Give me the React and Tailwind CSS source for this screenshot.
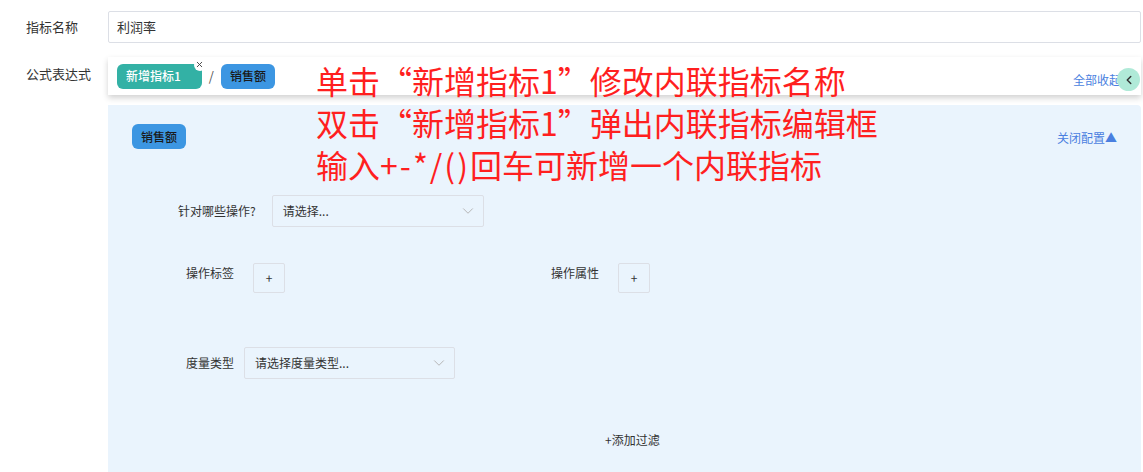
import React from 'react';
import { ChevronDown, ChevronLeft, X } from 'lucide-react';

const font = { fontFamily: '"Noto Sans CJK SC", "Noto Sans", sans-serif' };

const SelectBox = ({ placeholder, width }) => (
  <div className={`flex items-center justify-between h-[32px] border border-[#dcdfe6] rounded-[2px] pl-[10px] pr-[6px] text-[12px] text-[#333] ${width}`}>
    <span>{placeholder}</span>
    <ChevronDown className="h-[18px] w-[18px] text-[#b4b4b4]" strokeWidth={1.3} />
  </div>
);

const PlusButton = () => (
  <div className="flex items-center justify-center w-[32px] h-[30px] border border-[#dcdfe6] rounded-[2px] text-[12px] text-[#333]">+</div>
);

export default function App() {
  return (
    <div className="relative w-full h-[472px] bg-white overflow-hidden" style={font}>
      {/* 指标名称 */}
      <div className="flex items-center pt-[11px]">
        <div className="w-[108px] pl-[26px] text-[13px] text-[#333]">指标名称</div>
        <div className="flex-1 mr-[2px] h-[32px] border border-[#dcdfe6] rounded-[2px] flex items-center pl-[8px] text-[13px] text-[#333]">
          利润率
        </div>
      </div>

      {/* 公式表达式 */}
      <div className="flex mt-[14px]">
        <div className="w-[108px] pl-[26px] pt-[7px] text-[13px] text-[#333]">公式表达式</div>
        <div className="flex-1 mr-[2px] flex flex-col">
          <div className="relative h-[38px] bg-white shadow-[0_3px_6px_rgba(0,0,0,0.18)] flex items-center pl-[9px]">
            <div className="relative">
              <div className="h-[25px] pl-[9px] pr-[21px] flex items-center rounded-[6px] bg-[#33b1a5] text-white text-[12px] font-medium">新增指标1</div>
              <div className="absolute -top-[5px] -right-[4px] w-[12px] h-[12px] rounded-full bg-white flex items-center justify-center">
                <X className="h-[9px] w-[9px] text-[#444]" strokeWidth={2.5} />
              </div>
            </div>
            <span className="mx-[7px] text-[13px] text-[#555]">/</span>
            <div className="h-[25px] px-[9px] flex items-center rounded-[6px] bg-[#3c96e2] text-[#1a1a1a] text-[12px] font-medium">销售额</div>
            <span className="absolute right-[20px] top-[14px] text-[12px] text-[#4a7fe0]">全部收起</span>
            <div className="absolute right-[1px] top-[11px] w-[23px] h-[23px] rounded-full bg-[#b0ead8] flex items-center justify-center">
              <ChevronLeft className="h-[14px] w-[14px] text-[#333]" strokeWidth={2.5} />
            </div>
          </div>

          <div className="mt-[10px] h-[367px] bg-[#eaf4fd] rounded-tr-[4px] relative">
            <div className="flex items-start justify-between pl-[24px] pr-[24px] pt-[19px]">
              <div className="h-[25px] px-[9px] flex items-center rounded-[6px] bg-[#3c96e2] text-[#1a1a1a] text-[12px] font-medium">销售额</div>
              <span className="mt-[5px] text-[12px] text-[#4a7fe0]">关闭配置▲</span>
            </div>

            <div className="flex items-center mt-[46px] pl-[70px]">
              <span className="text-[12px] text-[#333] mr-[16px]">针对哪些操作?</span>
              <SelectBox placeholder="请选择..." width="w-[212px]" />
            </div>

            <div className="flex items-start mt-[36px]">
              <div className="flex items-start pl-[78px] w-[443px]">
                <span className="text-[12px] text-[#333] mr-[19px] mt-[1px]">操作标签</span>
                <PlusButton />
              </div>
              <div className="flex items-start">
                <span className="text-[12px] text-[#333] mr-[19px] mt-[1px]">操作属性</span>
                <PlusButton />
              </div>
            </div>

            <div className="flex items-center mt-[54px] pl-[78px]">
              <span className="text-[12px] text-[#333] mr-[10px]">度量类型</span>
              <SelectBox placeholder="请选择度量类型..." width="w-[211px]" />
            </div>

            <div className="mt-[52px] pl-[497px] text-[12px] text-[#333]">+添加过滤</div>
          </div>
        </div>
      </div>

      {/* 提示 */}
      <div className="absolute left-[316px] top-[59px] text-[32px] leading-[42px] text-[#ff1f1f] pointer-events-none whitespace-nowrap">
        <div>单击“新增指标1”修改内联指标名称</div>
        <div>双击“新增指标1”弹出内联指标编辑框</div>
        <div>输入<span className="tracking-[2px]">+-*/()</span>回车可新增一个内联指标</div>
      </div>
    </div>
  );
}
